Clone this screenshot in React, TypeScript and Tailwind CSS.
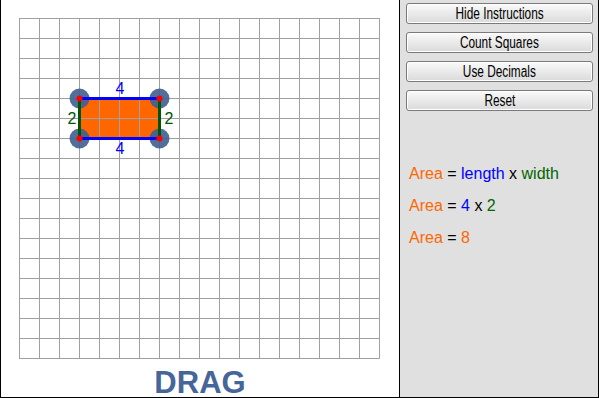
import React from "react";

const cols = 18;
const rows = 17;
const cell = 20;

function Grid() {
  const W = cols * cell;
  const H = rows * cell;
  const v = [];
  for (let i = 0; i <= cols; i++) v.push(i * cell + 0.5);
  const h = [];
  for (let j = 0; j <= rows; j++) h.push(j * cell + 0.5);
  const x0 = 60.5, x1 = 140.5, y0 = 80.5, y1 = 120.5;
  const corners = [
    [x0, y0],
    [x1, y0],
    [x0, y1],
    [x1, y1],
  ];
  return (
    <svg width={W + 1} height={H + 1} className="block" style={{ fontFamily: '"Liberation Sans", Arial, sans-serif' }}>
      <rect x={x0} y={y0} width={x1 - x0} height={y1 - y0} fill="#ff6600" />
      {v.map((x) => (
        <line key={"v" + x} x1={x} y1={0} x2={x} y2={H + 0.5} stroke="#a0a0a0" strokeWidth={1} />
      ))}
      {h.map((y) => (
        <line key={"h" + y} x1={0} y1={y} x2={W + 0.5} y2={y} stroke="#a0a0a0" strokeWidth={1} />
      ))}
      {corners.map(([cx, cy]) => (
        <circle key={"c" + cx + "-" + cy} cx={cx} cy={cy} r={10} fill="#3f5f8f" fillOpacity={0.9} />
      ))}
      <line x1={x0} y1={y0} x2={x1} y2={y0} stroke="#0000ff" strokeWidth={3} />
      <line x1={x0} y1={y1} x2={x1} y2={y1} stroke="#0000ff" strokeWidth={3} />
      <line x1={x0} y1={y0} x2={x0} y2={y1} stroke="#005500" strokeWidth={3} />
      <line x1={x1} y1={y0} x2={x1} y2={y1} stroke="#005500" strokeWidth={3} />
      {corners.map(([cx, cy]) => (
        <circle key={"d" + cx + "-" + cy} cx={cx} cy={cy} r={3} fill="#ff0000" />
      ))}
      <text x={101} y={70} fill="#0000ff" fontSize={16} textAnchor="middle" dominantBaseline="central">4</text>
      <text x={101} y={130} fill="#0000ff" fontSize={16} textAnchor="middle" dominantBaseline="central">4</text>
      <text x={53} y={100} fill="#005500" fontSize={16} textAnchor="middle" dominantBaseline="central">2</text>
      <text x={150} y={100} fill="#005500" fontSize={16} textAnchor="middle" dominantBaseline="central">2</text>
    </svg>
  );
}

function Btn({ label }: { label: string }) {
  return (
    <button className="h-[21px] w-full flex items-center justify-center rounded-[3px] border border-[#7a7a7a] bg-gradient-to-b from-[#fafafa] to-[#dadada] shadow-[inset_0_0_0_1px_#ffffff]">
      <span className="inline-block scale-x-[0.74] whitespace-nowrap text-[16px] leading-none text-black" style={{ fontFamily: '"Liberation Sans", Arial, sans-serif' }}>
        {label}
      </span>
    </button>
  );
}

export default function App() {
  return (
    <div className="w-[599px] h-[398px] flex border-l border-r border-b border-black bg-white overflow-hidden" style={{ fontFamily: '"Liberation Sans", Arial, sans-serif' }}>
      <div className="w-[399px] h-full border-r border-black flex flex-col items-start">
        <div className="pl-[18px] pt-[18px]">
          <Grid />
        </div>
        <div className="w-full text-center mt-[11px] text-[31px] leading-[26px] font-bold text-[#46669a]">DRAG</div>
      </div>
      <div className="flex-1 h-full bg-[#e0e0e0] flex flex-col">
        <div className="pl-[6px] pr-[5px] pt-[3px] flex flex-col gap-[8px]">
          <Btn label="Hide Instructions" />
          <Btn label="Count Squares" />
          <Btn label="Use Decimals" />
          <Btn label="Reset" />
        </div>
        <div className="pl-[9px] mt-[47px] text-[16px] leading-[32px] text-black">
          <div>
            <span className="text-[#ff6600]">Area</span> = <span className="text-[#0000ff]">length</span> x <span className="text-[#006600]">width</span>
          </div>
          <div>
            <span className="text-[#ff6600]">Area</span> = <span className="text-[#0000ff]">4</span> x <span className="text-[#006600]">2</span>
          </div>
          <div>
            <span className="text-[#ff6600]">Area</span> = <span className="text-[#ff6600]">8</span>
          </div>
        </div>
      </div>
    </div>
  );
}
